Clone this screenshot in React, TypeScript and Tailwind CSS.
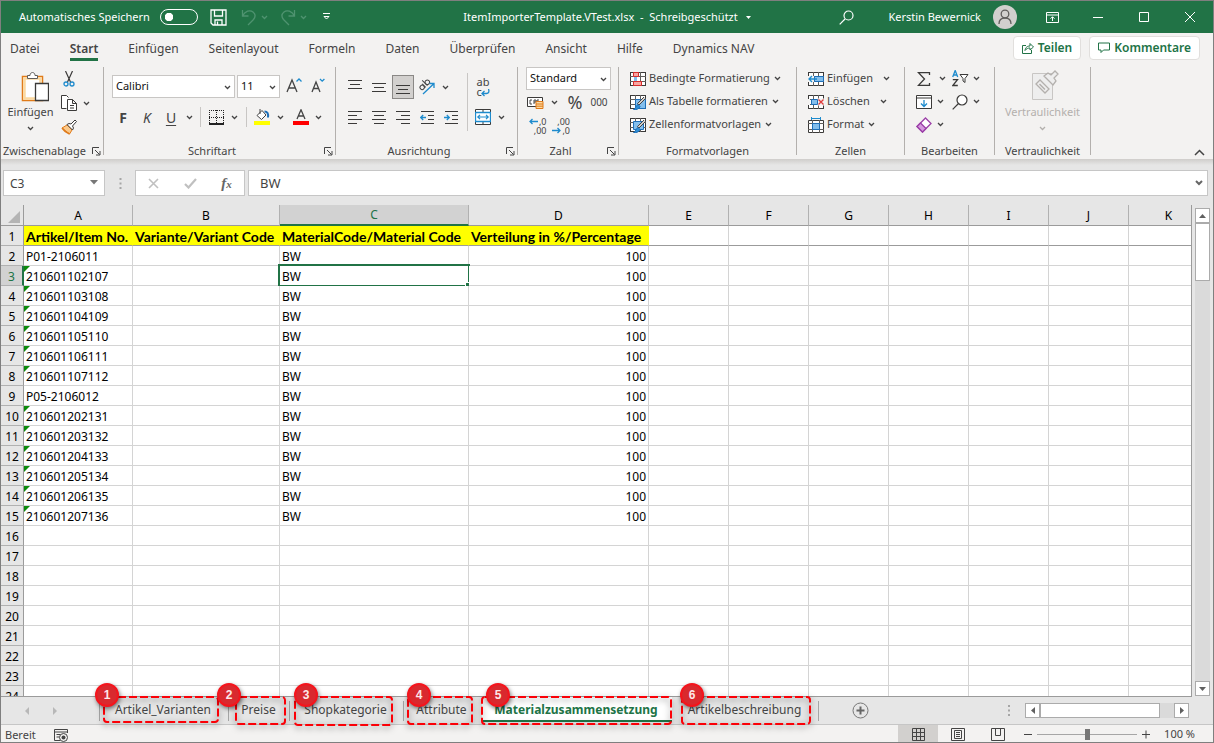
import React from "react";

type P = { children?: React.ReactNode; className?: string };

const Icon = ({ w = 16, h = 16, children, className = "" }: P & { w?: number; h?: number }) => (
  <svg width={w} height={h} viewBox={`0 0 ${w} ${h}`} fill="none" stroke="#444" className={`shrink-0 ${className}`} aria-hidden="true">
    {children}
  </svg>
);

const Chevron = ({ className = "" }: { className?: string }) => (
  <Icon w={7} h={5} className={className}>
    <path d="M1 1l2.500 2.500L6 1" stroke="currentColor" strokeWidth="1.300" />
  </Icon>
);

const Tool = ({ label, children, className = "w-6" }: P & { label: string }) => (
  <button type="button" aria-label={label} className={`flex h-6 shrink-0 items-center justify-center ${className}`}>
    {children}
  </button>
);

const Drop = ({ label, className = "w-3" }: { label: string; className?: string }) => (
  <Tool label={label} className={className}>
    <Chevron />
  </Tool>
);

const Group = ({ title, launcher, className = "", children }: P & { title: string; launcher?: boolean }) => (
  <section aria-label={title} className={`flex h-[88px] shrink-0 flex-col border-r border-[#b3b0ad] ${className}`}>
    <div className="flex h-[77px] shrink-0">{children}</div>
    <div className="flex h-[14px] shrink-0 items-center whitespace-nowrap">
      <span className={`flex-1 text-center ${launcher ? "pr-1" : ""}`}>{title}</span>
      {launcher && (
        <button type="button" aria-label={`${title} Optionen`} className="mr-0.5 shrink-0">
          <Icon w={9} h={9}>
            <path d="M.5 7V.5H7M3 3l4.500 4.500M8 4v4H4" />
          </Icon>
        </button>
      )}
    </div>
  </section>
);

const Combo = ({ label, value, className = "" }: { label: string; value: string; className?: string }) => (
  <label className={`relative block h-[23px] border border-[#c8c6c4] bg-white ${className}`}>
    <select aria-label={label} className="h-full w-full appearance-none bg-transparent pl-[3px] text-[#111] outline-none">
      <option>{value}</option>
    </select>
    <Chevron className="pointer-events-none absolute right-[3px] top-[9px]" />
  </label>
);

/* ---------- title bar ---------- */

const TitleBar = () => (
  <header className="grid h-8 shrink-0 grid-cols-[1fr_auto_1fr] items-center bg-[#217346] text-[11px] text-white">
    <div className="flex items-center pl-[18px]">
      <label htmlFor="autosave" className="whitespace-nowrap">Automatisches Speichern</label>
      <input id="autosave" type="checkbox" role="switch" className="ml-2.5 h-4 w-[38px] shrink-0 appearance-none rounded-full border border-white bg-[radial-gradient(circle_at_8px_7px,#fff_4px,transparent_4.5px)]" />
      <button type="button" aria-label="Speichern" className="ml-3">
        <Icon w={17} h={17}>
          <path d="M1 1h15v15H3l-2-2zM4.500 1v6h8V1M5 16v-5h7v5M7.500 12.500V16" stroke="#fff" strokeWidth="1.300" />
        </Icon>
      </button>
      <button type="button" aria-label="Rückgängig" className="ml-3.5">
        <Icon w={16} h={17}>
          <path d="M1.500 1v6h6M1.500 7C4 2 9 .5 12 3s2.500 5 .5 7.500L7 16" stroke="#4f9370" strokeWidth="1.300" />
        </Icon>
      </button>
      <Chevron className="ml-1 text-[#4f9370]" />
      <button type="button" aria-label="Wiederholen" className="ml-3">
        <Icon w={16} h={17}>
          <path d="M14.500 1v6h-6M14.500 7C12 2 7 .5 4 3s-2.500 5-.5 7.500L9 16" stroke="#4f9370" strokeWidth="1.300" />
        </Icon>
      </button>
      <Chevron className="ml-1 text-[#4f9370]" />
      <button type="button" aria-label="Symbolleiste anpassen" className="ml-4">
        <Icon w={7} h={8}>
          <path d="M0 .5h7" stroke="#fff" />
          <path d="M1 3.500l2.500 2.500L6 3.500z" stroke="#fff" fill="#217346" />
        </Icon>
      </button>
    </div>
    <div className="flex items-center gap-2 whitespace-nowrap">
      <h1>ItemImporterTemplate.VTest.xlsx&nbsp; -&nbsp; Schreibgeschützt</h1>
      <Icon w={5} h={3}><path d="M0 0h5L2.500 3z" fill="#fff" stroke="none" /></Icon>
    </div>
    <div className="flex h-full items-center justify-end">
      <button type="button" aria-label="Suchen" className="mr-[34px]">
        <Icon w={15} h={15}>
          <circle cx="9.500" cy="5.500" r="4.500" stroke="#fff" strokeWidth="1.200" />
          <path d="M6 9L.7 14.300" stroke="#fff" strokeWidth="1.200" />
        </Icon>
      </button>
      <span className="whitespace-nowrap">Kerstin Bewernick</span>
      <button type="button" aria-label="Konto" className="ml-3 mr-3 flex size-6 items-center justify-center rounded-full bg-[#d2d0ce]">
        <Icon w={14} h={16}>
          <circle cx="7" cy="5" r="3.800" stroke="#605e5c" strokeWidth="1.300" />
          <path d="M1 15c0-4 2.500-6 6-6s6 2 6 6" stroke="#605e5c" strokeWidth="1.300" />
        </Icon>
      </button>
      <Tool label="Menüband-Anzeigeoptionen" className="w-[46px]">
        <Icon w={13} h={11}>
          <path d="M.5.5h12v10H.5zM.5 3h12M6.500 9V5M4.500 6.700l2-2 2 2" stroke="#fff" />
        </Icon>
      </Tool>
      <Tool label="Minimieren" className="w-[46px]"><Icon w={10} h={11}><path d="M0 5.500h10" stroke="#fff" /></Icon></Tool>
      <Tool label="Maximieren" className="w-[46px]"><Icon w={10} h={10}><path d="M.5.5h9v9h-9z" stroke="#fff" /></Icon></Tool>
      <Tool label="Schließen" className="w-[46px]"><Icon w={10} h={10}><path d="M0 0l10 10M10 0L0 10" stroke="#fff" /></Icon></Tool>
    </div>
  </header>
);

const ribbonTabs = ["Datei", "Start", "Einfügen", "Seitenlayout", "Formeln", "Daten", "Überprüfen", "Ansicht", "Hilfe", "Dynamics NAV"];

const RibbonTabs = () => (
  <nav className="flex h-[34px] shrink-0 items-start justify-between pl-[9px] pr-[13px]">
    <div className="flex gap-[30px]">
      {ribbonTabs.map((t) => (
        <button
          key={t}
          type="button"
          className={`h-7 whitespace-nowrap border-b-[3px] pt-1.5 ${t === "Start" ? "border-[#217346] font-semibold" : "border-transparent"}`}
        >
          {t}
        </button>
      ))}
    </div>
    <div className="flex gap-2 pt-[3px] font-semibold text-[#217346]">
      <button type="button" className="flex h-6 items-center gap-1 rounded-sm border border-[#e1dfdd] bg-white px-2">
        <Icon w={12} h={12}>
          <path d="M4 3.500H.5v8h9V8M3 8.500C3.500 5 5.500 4 8 4V1.500L11.500 5 8 8V6C6 6 4.500 6.500 3 8.500z" stroke="#217346" />
        </Icon>
        Teilen
      </button>
      <button type="button" className="flex h-6 items-center gap-1 rounded-sm border border-[#e1dfdd] bg-white px-2">
        <Icon w={12} h={12}>
          <path d="M.5 1h11v7H5.500L3 10.500V8H.5z" stroke="#217346" />
        </Icon>
        Kommentare
      </button>
    </div>
  </nav>
);

/* ---------- ribbon ---------- */

const Lines = ({ rows }: { rows: [number, number, number][] }) => (
  <Icon w={14} h={14}>
    {rows.map(([x1, x2, y], i) => (
      <path key={i} d={`M${x1} ${y}.500H${x2}`} stroke="#3b3a39" />
    ))}
  </Icon>
);

const GridArt = () => (
  <>
    <rect x=".5" y="1.500" width="15" height="13" fill="#fff" stroke="#3b3a39" />
    <path d="M5.500 1v14M10.500 1v14M0 5.500h16M0 10.500h16" stroke="#605e5c" />
  </>
);

const CommandRow = ({ icon, label, gap = "ml-1" }: { icon: React.ReactNode; label: string; gap?: string }) => (
  <button type="button" className="flex h-[23px] items-center whitespace-nowrap">
    {icon}
    <span className="ml-[3px]">{label}</span>
    <Chevron className={gap} />
  </button>
);

const Brush = () => (
  <>
    <path d="M15.500 4.500L9 11l-1.500-1.500L14 3" fill="#d2d0ce" stroke="#444" />
    <path d="M3.500 15.500c2 0 2-4 4.500-5l2 2c-1 2.500-3.500 3.500-6.500 3z" fill="#2e8fd6" stroke="#1e6fb8" />
  </>
);

const Ribbon = () => (
  <div className="flex h-[92px] shrink-0 text-[11px]">
    <Group title="Zwischenablage" launcher className="w-[103px]">
      <button type="button" className="flex w-[59px] flex-col items-center pt-1">
        <Icon w={28} h={31} className="ml-2">
          <path d="M1.500 5.500h20v24h-20z" fill="#fff" stroke="#e07b1a" strokeWidth="1.500" />
          <path d="M3.500 7.500h16v20h-16z" stroke="#fbd9a0" strokeWidth="2.500" />
          <path d="M6.500 7.500V4.500H9C9 .5 14 .5 14 4.500h2.500v3z" fill="#fff" stroke="#605e5c" />
          <path d="M14.500 12.500h13v17h-13z" fill="#fff" stroke="#3b3a39" strokeWidth="1.300" />
        </Icon>
        <span className="mt-0.5 leading-4">Einfügen</span>
        <Chevron className="mt-1.5" />
      </button>
      <div className="flex flex-col">
        <Tool label="Ausschneiden" className="w-[18px]">
          <Icon w={12} h={16}>
            <path d="M2.500 0l5 11M9.500 0l-5 11" stroke="#3b3a39" strokeWidth="1.200" />
            <circle cx="3" cy="13" r="2" stroke="#1e8bcd" strokeWidth="1.300" /><circle cx="9" cy="13" r="2" stroke="#1e8bcd" strokeWidth="1.300" />
          </Icon>
        </Tool>
        <div className="flex">
          <Tool label="Kopieren" className="w-[18px]">
            <Icon w={16} h={16}>
              <path d="M5.500 13.500h-5V.5h5l2 2" fill="#fff" stroke="#3b3a39" />
              <path d="M6.500 4.500h5l4 4v7h-9zM11.500 4.500v4h4M9 10.500h4M9 13h4" fill="#fff" stroke="#3b3a39" />
            </Icon>
          </Tool>
          <Drop label="Kopieroptionen" className="ml-0.5 w-3" />
        </div>
        <Tool label="Format übertragen" className="w-[18px]">
          <Icon>
            <path d="M1 9l5-3 5 5-2.500 4z" fill="#fbc98a" stroke="#e07b1a" />
            <path d="M1 9c2 3 5 5 7.500 6" stroke="#e07b1a" strokeWidth="1.500" />
            <path d="M6 5.500l5.500 5.500 1-2-1-2L15.500 2.500 14 1l-4 4-2-.5z" fill="#fff" stroke="#3b3a39" />
          </Icon>
        </Tool>
      </div>
    </Group>

    <Group title="Schriftart" launcher className="w-[232px]">
      <div className="flex flex-col gap-1.5 pl-2 pt-2">
        <div className="flex">
          <Combo label="Schriftart" value="Calibri" className="w-[123px]" />
          <Combo label="Schriftgrad" value="11" className="ml-0.5 w-[43px]" />
          <Tool label="Schriftgrad vergrößern" className="ml-0.5 w-6">
            <Icon w={16} h={16} className="mb-1"><path d="M1 15L6 3l5 12M2.500 11h7" strokeWidth="1.300" /><path d="M10.500 4.500L13 2l2.500 2.500" stroke="#1e8bcd" strokeWidth="1.300" /></Icon>
          </Tool>
          <Tool label="Schriftgrad verkleinern" className="w-6">
            <Icon w={14} h={16} className="mb-1"><path d="M1 15L5 5l4 10M2.500 11.500h5" strokeWidth="1.300" /><path d="M9 2l2.200 2.200L13.400 2" stroke="#1e8bcd" strokeWidth="1.300" /></Icon>
          </Tool>
        </div>
        <div className="-ml-px flex items-center text-[14px]">
          <Tool label="Fett"><b>F</b></Tool>
          <Tool label="Kursiv"><i>K</i></Tool>
          <Tool label="Unterstrichen"><u className="underline-offset-2">U</u></Tool>
          <Drop label="Unterstreichung" />
          <span className="mx-[5px] h-5 w-px bg-[#c8c6c4]" />
          <Tool label="Rahmen" className="w-5">
            <Icon w={15} h={15}><path d="M0 .5h15M0 7.500h15M.5 0v14M7.500 0v14M14.500 0v14" strokeDasharray="1 1" stroke="#222" /><path d="M0 14h15" stroke="#222" strokeWidth="2" /></Icon>
          </Tool>
          <Drop label="Rahmenoptionen" className="ml-0.5 w-3" />
          <span className="mx-1.5 h-5 w-px bg-[#c8c6c4]" />
          <Tool label="Füllfarbe" className="w-[18px]">
            <Icon w={16} h={16}>
              <path d="M3 6.500L8 1.500l4 4.500-4.500 4.500z" fill="#fff" /><path d="M6 5V0" />
              <path d="M10.500 2.500c3 0 4 2 3.500 6" stroke="#1e6fb8" strokeWidth="2" />
              <path d="M0 12h16v4H0z" fill="#ff0" stroke="none" />
            </Icon>
          </Tool>
          <Drop label="Füllfarben" className="ml-[3px] w-3" />
          <Tool label="Schriftfarbe" className="ml-[7px] w-4">
            <Icon w={16} h={16}><path d="M4 10L8 .8 12 10M5.300 7h5.400" strokeWidth="1.300" /><path d="M0 12h16v4H0z" fill="#f00" stroke="none" /></Icon>
          </Tool>
          <Drop label="Schriftfarben" className="ml-[3px] w-3" />
        </div>
      </div>
    </Group>

    <Group title="Ausrichtung" launcher className="w-[182px]">
      <div className="flex flex-col gap-1.5 pl-[7px] pt-2">
        <div className="flex">
          <Tool label="Oben ausrichten"><Lines rows={[[0, 14, 0], [2, 12, 4], [0, 14, 8]]} /></Tool>
          <Tool label="Zentriert ausrichten"><Lines rows={[[0, 14, 3], [2, 12, 7], [0, 14, 11]]} /></Tool>
          <Tool label="Unten ausrichten" className="w-6"><span className="flex h-6 w-[22px] items-center justify-center border border-[#8a8886] bg-[#d2d0ce]"><Lines rows={[[0, 14, 5], [2, 12, 9], [0, 14, 13]]} /></span></Tool>
          <Tool label="Ausrichtung">
            <Icon w={18} h={16}>
              <g transform="rotate(-45 7 7)"><circle cx="4" cy="6" r="2.200" /><path d="M6.500 3.500v5M9 1v7.500" /><circle cx="11.300" cy="6" r="2.200" /></g>
              <path d="M5 15L15.500 5M11.500 4.500h4.500V9" stroke="#1e8bcd" strokeWidth="1.300" />
            </Icon>
          </Tool>
          <Drop label="Ausrichtungsoptionen" />
        </div>
        <div className="flex">
          <Tool label="Linksbündig"><Lines rows={[[0, 14, 1], [0, 9, 5], [0, 14, 9], [0, 9, 13]]} /></Tool>
          <Tool label="Zentriert"><Lines rows={[[0, 14, 1], [2, 12, 5], [0, 14, 9], [2, 12, 13]]} /></Tool>
          <Tool label="Rechtsbündig"><Lines rows={[[0, 14, 1], [5, 14, 5], [0, 14, 9], [5, 14, 13]]} /></Tool>
          <Tool label="Einzug verkleinern">
            <Icon w={14} h={14}><path d="M1 1.500h13M8 5.500h6M8 9.500h6M1 13.500h13" stroke="#3b3a39" /><path d="M6 7.500H.7M3.200 5L.7 7.500 3.200 10" stroke="#1e8bcd" strokeWidth="1.300" /></Icon>
          </Tool>
          <Tool label="Einzug vergrößern">
            <Icon w={14} h={14}><path d="M1 1.500h13M8 5.500h6M8 9.500h6M1 13.500h13" stroke="#3b3a39" /><path d="M0 7.500h5.300M2.800 5l2.500 2.500L2.800 10" stroke="#1e8bcd" strokeWidth="1.300" /></Icon>
          </Tool>
        </div>
      </div>
      <span className="ml-1 mt-1.5 h-[58px] w-px bg-[#c8c6c4]" />
      <div className="flex flex-col gap-1.5 pl-[3px] pt-2">
        <Tool label="Textumbruch">
          <span className="relative block w-[13px] text-left text-[11px] leading-[10px]">
            <span className="block">ab</span>
            <span className="block">c</span>
            <Icon w={9} h={8} className="absolute bottom-0 right-0"><path d="M7.500 0c1 3 0 4.500-2 4.500H1M3.500 2L1 4.500 3.500 7" stroke="#1e8bcd" strokeWidth="1.300" /></Icon>
          </span>
        </Tool>
        <div className="flex">
          <Tool label="Verbinden und zentrieren">
            <Icon w={16} h={16}>
              <path d="M.5.5h15v15H.5zM8 0v4M8 12v4" fill="#fff" stroke="#3b3a39" />
              <path d="M.5 3.500h15v9H.5z" fill="#fff" stroke="#1e8bcd" strokeWidth="1.300" />
              <path d="M3 8h10M5 5.800L2.800 8 5 10.200M11 5.800L13.200 8 11 10.200" stroke="#1e8bcd" strokeWidth="1.200" />
            </Icon>
          </Tool>
          <Drop label="Verbindungsoptionen" />
        </div>
      </div>
    </Group>

    <Group title="Zahl" launcher className="w-[101px]">
      <div className="flex flex-col pl-2">
        <Combo label="Zahlenformat" value="Standard" className="w-[85px]" />
        <div className="flex h-6 items-center">
          <Tool label="Währungsformat">
            <Icon w={17} h={13} className="-ml-1.5">
              <path d="M.5 1.500h15v9H.5z" fill="#fff" stroke="#3b3a39" /><path d="M5 4H3v4h2M7 8V4h2v2H7M12 4h-2v4" />
              <path d="M9 5.500h7v7H9zM9 8h7M9 10.200h7" fill="#fbd9a0" stroke="#e07b1a" />
            </Icon>
          </Tool>
          <Drop label="Währungen" className="-ml-0.5 w-3" />
          <Tool label="Prozentformat" className="ml-1 w-[22px] text-[18px]">%</Tool>
          <Tool label="1.000er-Trennzeichen" className="w-[26px] text-[10px]">000</Tool>
        </div>
        <div className="flex h-6 text-[9px] leading-[9px]">
          <Tool label="Dezimalstelle hinzufügen" className="w-[23px]">
            <span className="relative flex w-[18px] flex-col items-end">
              <span>,0</span>
              <span>,00</span>
              <Icon w={9} h={7} className="absolute left-0 top-px"><path d="M9 3.500H1M3.500 1L1 3.500 3.500 6" stroke="#1e8bcd" strokeWidth="1.300" /></Icon>
            </span>
          </Tool>
          <Tool label="Dezimalstelle löschen">
            <span className="relative flex w-[18px] flex-col items-end">
              <span>,00</span>
              <span>,0</span>
              <Icon w={9} h={7} className="absolute bottom-px left-0"><path d="M0 3.500h8M5.500 1L8 3.500 5.500 6" stroke="#1e8bcd" strokeWidth="1.300" /></Icon>
            </span>
          </Tool>
        </div>
      </div>
    </Group>

    <Group title="Formatvorlagen" className="w-[178px]">
      <div className="flex flex-col items-start pl-[11px]">
        <CommandRow label="Bedingte Formatierung" icon={<Icon><GridArt /><path d="M3.500 1.500h5v4h-5zM3.500 10.500h8v4h-8z" fill="#f8a5a0" stroke="#d92c2c" /><path d="M4 6h3v4H4z" fill="#83beec" stroke="none" /></Icon>} />
        <CommandRow label="Als Tabelle formatieren" icon={<Icon><GridArt /><path d="M5.500 5.500h10v9h-10z" fill="#83beec" stroke="#1e6fb8" /><Brush /></Icon>} />
        <CommandRow label="Zellenformatvorlagen" icon={<Icon><GridArt /><path d="M3.500 4.500h10v8h-10z" fill="#83beec" stroke="#1e6fb8" /><Brush /></Icon>} />
      </div>
    </Group>

    <Group title="Zellen" className="w-[108px]">
      <div className="flex flex-col items-start pl-[11px]">
        <CommandRow label="Einfügen" gap="ml-2.5" icon={<Icon><GridArt /><path d="M6.500 5.500h9v5h-9z" fill="#83beec" stroke="#1e6fb8" /><path d="M0 5h6v6H0z" fill="#f3f2f1" stroke="none" /><path d="M9 8H1M4 5L1 8l3 3" stroke="#1e8bcd" strokeWidth="1.300" /></Icon>} />
        <CommandRow label="Löschen" gap="ml-2.5" icon={<Icon><GridArt /><path d="M9 4.500h7v7H9zM0 5h2v6H0z" fill="#f3f2f1" stroke="none" /><path d="M3.500 5.500h6v5h-6z" fill="#83beec" stroke="#1e6fb8" /><path d="M10.500 5.500l5 5M15.500 5.500l-5 5" stroke="#e03b3b" strokeWidth="1.300" /></Icon>} />
        <CommandRow label="Format" icon={<Icon><path d="M.5 3.500h15v12H.5z" fill="#fff" stroke="#3b3a39" /><path d="M4.500 3v13M11.500 3v13M0 6.500h16M0 12.500h16" stroke="#605e5c" /><path d="M4.500 6.500h7v6h-7z" fill="#83beec" stroke="#1e6fb8" /><path d="M3.500 1.500h9M3.500 0v3M12.500 0v3" stroke="#1e8bcd" /></Icon>} />
      </div>
    </Group>

    <Group title="Bearbeiten" className="w-[90px]">
      <div className="flex flex-col pl-[9px]">
        <div className="flex h-[23px] items-center">
          <Tool label="AutoSumme" className="w-5"><Icon w={14} h={14}><path d="M12.500 3V.7H1.500L7.500 7l-6 6.300h11V11" strokeWidth="1.300" stroke="#3b3a39" /></Icon></Tool>
          <Drop label="Summenoptionen" className="ml-0.5 w-3" />
          <Tool label="Sortieren und Filtern" className="ml-0.5 w-5">
            <Icon w={17} h={17}>
              <path d="M.7 7L3.200.5 5.700 7M1.700 5h3" stroke="#1e8bcd" strokeWidth="1.300" /><path d="M.8 9.700h4.700L.8 15.500h5" stroke="#3b3a39" strokeWidth="1.300" />
              <path d="M8 4.500h8L13 8.500v4l-2-1.500V8.500z" fill="#fff" stroke="#3b3a39" />
            </Icon>
          </Tool>
          <Drop label="Sortieroptionen" />
        </div>
        <div className="flex h-[23px] items-center">
          <Tool label="Ausfüllen" className="w-5"><Icon w={16} h={14}><path d="M.5.5h15v13H.5zM.5 3h15" fill="#fff" stroke="#3b3a39" /><path d="M8 5v6.500M5 8.500l3 3 3-3" stroke="#1e8bcd" strokeWidth="1.300" /></Icon></Tool>
          <Drop label="Fülloptionen" />
          <Tool label="Suchen und Auswählen" className="ml-1 w-5"><Icon w={16} h={16}><circle cx="10" cy="6" r="5" fill="#fff" stroke="#3b3a39" strokeWidth="1.200" /><path d="M6.500 9.500L.7 15.300" stroke="#3b3a39" strokeWidth="1.200" /></Icon></Tool>
          <Drop label="Suchoptionen" />
        </div>
        <div className="flex h-[23px] items-center">
          <Tool label="Löschen" className="w-5"><Icon w={16} h={16}><path d="M9.500 1L15 6.500 6.500 15 1 9.500z" fill="#fff" stroke="#9b3fa8" strokeWidth="1.300" /><path d="M4.500 6L10 11.500 6.500 15 1 9.500z" fill="#d59ade" stroke="#9b3fa8" strokeWidth="1.300" /></Icon></Tool>
          <Drop label="Löschoptionen" />
        </div>
      </div>
    </Group>

    <Group title="Vertraulichkeit" className="w-[96px]">
      <button type="button" disabled className="flex flex-1 flex-col items-center pt-0.5 text-[#b3b0ad]">
        <Icon w={28} h={31} className="ml-1">
          <path d="M1.500 4.500h20v26h-20z" fill="#eee" stroke="#c8c6c4" />
          <path d="M5 15l4-4 9 9-4 4z" fill="#eee" stroke="#b3b0ad" strokeWidth="1.300" /><path d="M8.500 15l5.500 5.500" stroke="#b3b0ad" strokeWidth="1.500" />
          <path d="M13 7l4-3 3 2 4-4 3 3-4 4 2 3-3 4z" fill="#eee" stroke="#b3b0ad" strokeWidth="1.300" />
        </Icon>
        <span className="mt-1 leading-4">Vertraulichkeit</span>
        <Chevron className="mt-1.5" />
      </button>
    </Group>

    <div className="flex flex-1 items-end justify-end pb-[3px] pr-2">
      <button type="button" aria-label="Menüband reduzieren"><Icon w={11} h={7}><path d="M1 6l4.500-4.500L10 6" strokeWidth="1.500" /></Icon></button>
    </div>
  </div>
);

/* ---------- formula bar ---------- */

const FormulaBar = () => (
  <div className="flex h-[46px] shrink-0 items-start bg-[linear-gradient(#cfcdcb,#e6e6e6_6px)] pl-0.5 pr-[5px] pt-[11px]">
    <div className="relative h-[26px] w-[102px] shrink-0 border border-[#c6c6c6] bg-white">
      <input aria-label="Namenfeld" defaultValue="C3" className="h-full w-full bg-transparent pl-1.5 outline-none" />
      <Icon w={8} h={5} className="pointer-events-none absolute right-1.5 top-[9px]"><path d="M0 0h8L4 4.500z" fill="#777" stroke="none" /></Icon>
    </div>
    <Icon w={3} h={11} className="ml-3.5 mt-2"><path d="M1.500 0v11" stroke="#a6a6a6" strokeWidth="2" strokeDasharray="2 2.500" /></Icon>
    <div className="ml-[13px] flex h-[26px] w-[110px] shrink-0 items-center justify-around border border-[#c6c6c6] bg-white">
      <button type="button" aria-label="Abbrechen"><Icon w={11} h={11}><path d="M1 1l9 9M10 1l-9 9" stroke="#c0c0c0" strokeWidth="1.600" /></Icon></button>
      <button type="button" aria-label="Eingeben"><Icon w={13} h={11}><path d="M1 6l3.500 3.500L12 1" stroke="#c0c0c0" strokeWidth="2.200" /></Icon></button>
      <button type="button" aria-label="Funktion einfügen" className="font-['Liberation_Serif',serif] text-[15px] font-bold italic leading-none text-[#666]">f<span className="text-[11px]">x</span></button>
    </div>
    <div className="relative ml-[3px] h-[26px] flex-1 border border-[#c6c6c6] bg-white">
      <input aria-label="Bearbeitungsleiste" defaultValue="BW" className="h-full w-full bg-transparent pl-[11px] text-[13px] outline-none" />
      <Icon w={8} h={6} className="pointer-events-none absolute right-1 top-[9px]"><path d="M1 1l3 3 3-3" stroke="#666" strokeWidth="2" /></Icon>
    </div>
  </div>
);

/* ---------- worksheet ---------- */

const columns = ["A", "B", "C", "D", "E", "F", "G", "H", "I", "J", "K"];
const headings = ["Artikel/Item No.", "Variante/Variant Code", "MaterialCode/Material Code", "Verteilung in %/Percentage"];
const articles = [
  "P01-2106011", "210601102107", "210601103108", "210601104109", "210601105110", "210601106111", "210601107112",
  "P05-2106012", "210601202131", "210601203132", "210601204133", "210601205134", "210601206135", "210601207136",
];
const rowNumbers = Array.from({ length: 24 }, (_, i) => i + 1);

const cellText = (row: number, col: number) => {
  if (row === 1) return headings[col] ?? "";
  const article = articles[row - 2];
  if (!article) return "";
  return [article, "", "BW", "100"][col] ?? "";
};

const Cell = ({ row, col }: { row: number; col: number }) => {
  const text = cellText(row, col);
  const heading = row === 1 && col < 4;
  const asText = col === 0 && /^\d/.test(text);
  return (
    <td
      className={`relative h-5 overflow-visible whitespace-nowrap border-b border-r pb-0 pt-0.5 leading-[17px] ${row === 1 ? "border-b-[#9b9b9b]" : "border-b-[#d4d4d4]"} ${
        heading ? "border-r-[#ff0] bg-[#ff0] font-['Lato',sans-serif] text-[14px] font-bold" : "border-r-[#d4d4d4] bg-white"
      } ${col === 3 && row > 1 ? "pl-0 pr-0.5 text-right" : "pl-0.5 pr-0"}`}
    >
      {asText && <span className="absolute left-0 top-0 size-0 border-r-[6px] border-t-[6px] border-r-transparent border-t-[#0b8a0b]" />}
      {text}
      {row === 3 && col === 2 && (
        <span className="absolute -inset-0.5 border-2 border-[#217346]">
          <span className="absolute -bottom-[3px] -right-[3px] size-1.5 border-l border-t border-white bg-[#217346]" />
        </span>
      )}
    </td>
  );
};

const Sheet = () => (
  <div className="flex min-h-0 flex-1 bg-[#e6e6e6]">
    <div className="min-w-0 flex-1 overflow-hidden border-b border-r border-[#9b9b9b] text-black">
      <table className="w-[1208px] table-fixed border-separate border-spacing-0">
        <colgroup>
          <col className="w-[23px]" />
          <col className="w-[109px]" />
          <col className="w-[147px]" />
          <col className="w-[189px]" />
          <col className="w-[180px]" />
          {columns.slice(4).map((c) => <col key={c} className="w-[80px]" />)}
        </colgroup>
        <thead>
          <tr>
            <th className="h-[21px] border-b border-r border-[#9b9b9b] p-0">
              <Icon w={13} h={13} className="ml-[7px] mt-1"><path d="M12 0v12H0z" fill="#b4b4b4" stroke="none" /></Icon>
            </th>
            {columns.map((c) => (
              <th
                key={c}
                scope="col"
                className={`h-[21px] border-r p-0 font-normal leading-[19px] ${
                  c === "C" ? "border-b-2 border-b-[#217346] border-r-[#b1b1b1] bg-[#d2d2d2] text-[#217346]" : "border-b border-b-[#9b9b9b] border-r-[#b1b1b1]"
                }`}
              >
                {c}
              </th>
            ))}
          </tr>
        </thead>
        <tbody>
          {rowNumbers.map((r) => (
            <tr key={r}>
              <th
                scope="row"
                className={`h-5 border-b px-0 pb-0 pt-0.5 text-center font-normal leading-[17px] ${
                  r === 3 ? "border-b-[#b1b1b1] border-r-2 border-r-[#217346] bg-[#d2d2d2] text-[#217346]" : "border-b-[#b1b1b1] border-r border-r-[#9b9b9b]"
                }`}
              >
                {r}
              </th>
              {columns.map((c, i) => <Cell key={c} row={r} col={i} />)}
            </tr>
          ))}
        </tbody>
      </table>
    </div>
    <div className="mb-px ml-[3px] mr-[3px] mt-[3px] flex w-[15px] flex-col bg-[#dadada]">
      <button type="button" aria-label="Nach oben" className="flex h-[15px] items-center justify-center border border-[#ababab] bg-white"><Icon w={7} h={4}><path d="M0 4h7L3.500 0z" fill="#606060" stroke="none" /></Icon></button>
      <div className="h-[58px] border border-[#ababab] bg-white" />
      <button type="button" aria-label="Nach unten" className="mt-auto flex h-[15px] items-center justify-center border border-[#ababab] bg-white"><Icon w={7} h={4}><path d="M0 0h7L3.500 4z" fill="#606060" stroke="none" /></Icon></button>
    </div>
  </div>
);

/* ---------- sheet tabs ---------- */

const sheets = [
  { name: "Artikel_Varianten", tab: "w-[130px]", frame: "left-1 right-[10px] h-[27px]", badge: "-left-1" },
  { name: "Preise", tab: "w-[61px]", frame: "left-1.5 right-1 h-[29px]", badge: "-left-3" },
  { name: "Shopkategorie", tab: "w-[113px]", frame: "left-1 right-[10px] h-[30px]", badge: "left-1" },
  { name: "Attribute", tab: "w-[79px]", frame: "left-1 right-[9px] h-[29px]", badge: "left-1" },
  { name: "Materialzusammensetzung", tab: "w-[190px]", frame: "-left-px right-0 h-[29px]", badge: "left-1" },
  { name: "Artikelbeschreibung", tab: "w-[147px]", frame: "left-[9px] right-2 h-[29px]", badge: "left-2" },
];

const SheetTabs = () => (
  <div className="flex h-[27px] shrink-0 items-stretch bg-[#e6e6e6]">
    <div className="flex w-[98px] shrink-0 items-center gap-6 pl-6">
      <button type="button" aria-label="Vorheriges Blatt"><Icon w={4} h={8}><path d="M4 0v8L0 4z" fill="#b8b8b8" stroke="none" /></Icon></button>
      <button type="button" aria-label="Nächstes Blatt"><Icon w={4} h={8}><path d="M0 0v8l4-4z" fill="#b8b8b8" stroke="none" /></Icon></button>
    </div>
    {sheets.map((s, i) => {
      const active = i === 4;
      return (
        <div key={s.name} className={`relative flex shrink-0 ${s.tab}`}>
          {(i === 0 || i === 3) && <span className="absolute left-0 top-1 h-5 w-px bg-[#a6a6a6]" />}
          <button
            type="button"
            className={`flex-1 whitespace-nowrap pr-0.5 ${active ? "mb-0.5 border-b-2 border-[#217346] bg-white pt-0.5 font-bold text-[#217346]" : "pb-px"}`}
          >
            {s.name}
          </button>
          {(i < 2 || i === 5) && <span className="absolute right-0 top-1 h-5 w-px bg-[#a6a6a6]" />}
          <div className={`pointer-events-none absolute -top-px ${s.frame}`}>
            <svg className="h-full w-full overflow-visible drop-shadow-[0_2px_3px_rgba(0,0,0,0.5)]" aria-hidden="true">
              <rect x="1" y="1" rx="3" className="h-[calc(100%-2px)] w-[calc(100%-2px)]" fill="none" stroke="#fb0007" strokeWidth="2" strokeDasharray="8 3" />
            </svg>
          </div>
          <span className={`pointer-events-none absolute -top-[14px] flex size-6 items-center justify-center rounded-full border-2 border-[#f5141c] bg-[#d9292e] font-['Liberation_Sans',sans-serif] text-[12px] font-bold text-[#fde8e8] shadow-[1px_2px_4px_rgba(0,0,0,0.5)] ${s.badge}`}>
            {i + 1}
          </span>
        </div>
      );
    })}
    <button type="button" aria-label="Neues Blatt" className="ml-[33px] shrink-0">
      <Icon w={17} h={17}><circle cx="8.500" cy="8.500" r="7.500" stroke="#777" /><path d="M8.500 4.500v8M4.500 8.500h8" stroke="#666" strokeWidth="2" /></Icon>
    </button>
    <div className="flex flex-1 items-center justify-end pr-6">
      <Icon w={2} h={11} className="mr-[15px]"><path d="M1 0v11" stroke="#a6a6a6" strokeWidth="2" strokeDasharray="2 2.500" /></Icon>
      <div className="flex h-[15px] w-[164px] bg-[#dadada]">
        <button type="button" aria-label="Nach links" className="flex w-[15px] items-center justify-center border border-[#ababab] bg-white"><Icon w={4} h={7}><path d="M4 0v7L0 3.500z" fill="#606060" stroke="none" /></Icon></button>
        <div className="w-[120px] border border-[#ababab] bg-white" />
        <button type="button" aria-label="Nach rechts" className="ml-auto flex w-[15px] items-center justify-center border border-[#ababab] bg-white"><Icon w={4} h={7}><path d="M0 0v7l4-3.500z" fill="#606060" stroke="none" /></Icon></button>
      </div>
    </div>
  </div>
);

/* ---------- status bar ---------- */

const StatusBar = () => (
  <footer className="flex h-[18px] shrink-0 items-center border-t border-[#c6c6c6] text-[11px]">
    <span className="ml-1 pt-1">Bereit</span>
    <button type="button" aria-label="Makro aufzeichnen" className="ml-[18px] pt-1">
      <Icon w={15} h={13}><path d="M6 11.500H.5v-11h13V4M.5 3h13M2.500 5.500h4M2.500 8h3" /><circle cx="9.500" cy="8.500" r="4" fill="#f3f2f1" /><circle cx="9.500" cy="8.500" r="2" fill="#444" stroke="none" /></Icon>
    </button>
    <div className="ml-auto flex h-full items-center">
      <Tool label="Normal" className="max-h-full w-10 bg-[#d2d0ce] pt-0.5"><Icon w={13} h={13}><path d="M.5.5h12v12H.5zM4.500 0v13M8.500 0v13M0 4.500h13M0 8.500h13" /></Icon></Tool>
      <Tool label="Seitenlayout" className="max-h-full w-10 pt-0.5"><Icon w={14} h={13}><path d="M.5.5h13v12H.5zM3.500 2.500h7v8h-7zM5 4.500h4M5 6.500h4M5 8.500h4" /></Icon></Tool>
      <Tool label="Umbruchvorschau" className="max-h-full w-10 pt-0.5"><Icon w={14} h={13}><path d="M.5.5h13v12H.5zM4.500 0v7.500h5V0" /></Icon></Tool>
      <button type="button" aria-label="Verkleinern" className="ml-1.5 pt-0.5"><Icon w={8} h={9}><path d="M0 4.500h8" /></Icon></button>
      <input
        type="range"
        aria-label="Zoom"
        min={0}
        max={200}
        defaultValue={100}
        className="mx-[5px] mt-0.5 h-3 w-[100px] appearance-none bg-[linear-gradient(#a6a6a6,#a6a6a6)] bg-[length:100%_1px] bg-center bg-no-repeat [&::-webkit-slider-thumb]:h-[11px] [&::-webkit-slider-thumb]:w-[5px] [&::-webkit-slider-thumb]:appearance-none [&::-webkit-slider-thumb]:bg-[#777]"
      />
      <button type="button" aria-label="Vergrößern" className="pt-0.5"><Icon w={8} h={9}><path d="M0 4.500h8M4 .5v8" /></Icon></button>
      <span className="ml-3.5 mr-[18px] whitespace-nowrap pt-0.5">100 %</span>
    </div>
  </footer>
);

export default function App() {
  return (
    <div className="flex h-screen flex-col overflow-hidden border border-[#7f7f7f] bg-[#f3f2f1] font-['Noto_Sans','Open_Sans',sans-serif] text-[12px] text-[#444]">
      <TitleBar />
      <RibbonTabs />
      <Ribbon />
      <FormulaBar />
      <Sheet />
      <SheetTabs />
      <StatusBar />
    </div>
  );
}
